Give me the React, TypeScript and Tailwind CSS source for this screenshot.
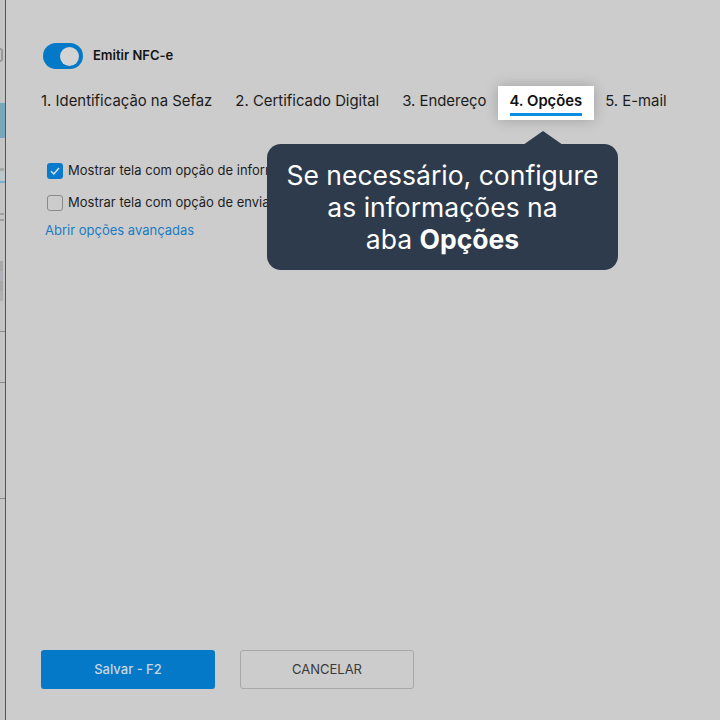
const tabs = [
  "1. Identificação na Sefaz",
  "2. Certificado Digital",
  "3. Endereço",
  "4. Opções",
  "5. E-mail",
];

function LeftEdge() {
  return (
    <div className="flex w-[5px] shrink-0 flex-col bg-[#c4c4c4]">
      <div className="h-[48px]" />
      <div className="h-[14px] w-[3px] rounded-r-full border-2 border-l-0 border-[#9a9a9a]" />
      <div className="h-[41px]" />
      <div className="h-[35px] bg-[#78a6bb]" />
      <div className="h-[30px]" />
      <div className="h-[3px] w-[4px] bg-[#a8a8a8]" />
      <div className="h-[10px] bg-[#bcc8cc]" />
      <div className="h-[2px] bg-[#7bb0cc]" />
      <div className="h-[30px]" />
      <div className="h-[2px] w-[4px] bg-[#a0a0a0]" />
      <div className="h-[4px]" />
      <div className="h-[2px] w-[4px] bg-[#a0a0a0]" />
      <div className="h-[40px]" />
      <div className="h-[10px] w-[3px] bg-[#a8a8a8]" />
      <div className="h-[10px] w-[3px] bg-[#b0b0b8]" />
      <div className="h-[10px] w-[3px] bg-[#a8a8a8]" />
      <div className="h-[10px] w-[3px] bg-[#b0b0b0]" />
      <div className="h-[30px]" />
      <div className="h-[1px] bg-[#8a8a8a]" />
      <div className="h-[50px]" />
      <div className="h-[1px] bg-[#8a8a8a]" />
      <div className="h-[115px]" />
      <div className="h-[1px] bg-[#8a8a8a]" />
      <div className="flex-1" />
    </div>
  );
}

export default function App() {
  return (
    <div
      className="flex h-[720px] w-[720px] overflow-hidden bg-[#cccccc]"
      style={{ fontFamily: "Inter, 'Noto Sans', sans-serif" }}
    >
      <LeftEdge />
      <div className="relative flex flex-1 flex-col border-l border-[#555555] bg-[#cccccc] pl-[35px]">
        <div className="mt-[43px] flex items-center gap-[10px] pl-[2px]">
          <div className="flex h-[26px] w-[40px] items-center justify-end rounded-full bg-[#0479c7] pr-[4px]">
            <div className="h-[19px] w-[19px] rounded-full bg-[#d4d4d4]" />
          </div>
          <span className="text-[13px] font-semibold text-[#141414]">Emitir NFC-e</span>
        </div>

        <div className="-ml-[11.5px] mt-[17px] flex h-[34px] items-stretch">
          {tabs.map((tab) => {
            const active = tab === "4. Opções";
            return (
              <div
                key={tab}
                className={
                  active
                    ? "relative z-10 flex items-center bg-white px-[11.5px] shadow-[0_0_14px_rgba(0,0,0,0.22)]"
                    : "flex items-center px-[11.5px] pb-[4px]"
                }
              >
                <span
                  className={
                    active
                      ? "border-b-[3px] border-[#0a8ee0] pb-[2px] pt-[1px] text-[14.8px] font-semibold leading-[20px] text-[#111111]"
                      : "text-[14.9px] leading-[20px] text-[#1c1c1c]"
                  }
                >
                  {tab}
                </span>
              </div>
            );
          })}
        </div>

        <div className="mt-[41px] flex flex-col gap-[12px] pl-[6px]">
          <label className="flex h-[20px] items-center gap-[5px] whitespace-nowrap">
            <span className="flex h-[16px] w-[16px] items-center justify-center rounded-[3px] bg-[#0a7acc]">
              <svg width="12" height="12" viewBox="0 0 12 12" fill="none">
                <path d="M2 6.3 L4.8 9 L10 3" stroke="#d9e6f0" strokeWidth="1.4" />
              </svg>
            </span>
            <span className="text-[13px] text-[#1e1e1e]">Mostrar tela com opção de informar CPF/CNPJ</span>
          </label>
          <label className="flex h-[20px] items-center gap-[5px] whitespace-nowrap">
            <span className="h-[16px] w-[16px] rounded-[3px] border border-[#8a8a8a]" />
            <span className="text-[13px] text-[#1e1e1e]">Mostrar tela com opção de enviar por e-mail</span>
          </label>
        </div>
        <a className="ml-[4px] mt-[8px] text-[13px] text-[#1a7cc4]">Abrir opções avançadas</a>

        <div className="flex-1" />

        <div className="mb-[31px] flex gap-[25px]">
          <button
            type="button"
            className="h-[39px] w-[174px] rounded-[3px] bg-[#0479c7] text-[13px] font-medium text-[#cad6e2]"
          >
            Salvar - F2
          </button>
          <button
            type="button"
            className="h-[39px] w-[174px] rounded-[3px] border border-[#a8a8a8] text-[13px] text-[#3a3a3a]"
          >
            CANCELAR
          </button>
        </div>

        <div className="absolute left-[261px] top-[144px] w-[351px] rounded-[14px] bg-[#2d3b4c] py-[15px] text-center text-[26.5px] leading-[32px] text-white">
          <svg
            className="absolute -top-[13px] left-[256px]"
            width="40"
            height="14"
            viewBox="0 0 40 14"
          >
            <path d="M0 14 L20 0 L40 14 Z" fill="#2d3b4c" />
          </svg>
          Se necessário, configure
          <br />
          as informações na
          <br />
          aba <span className="font-bold">Opções</span>
        </div>
      </div>
    </div>
  );
}
